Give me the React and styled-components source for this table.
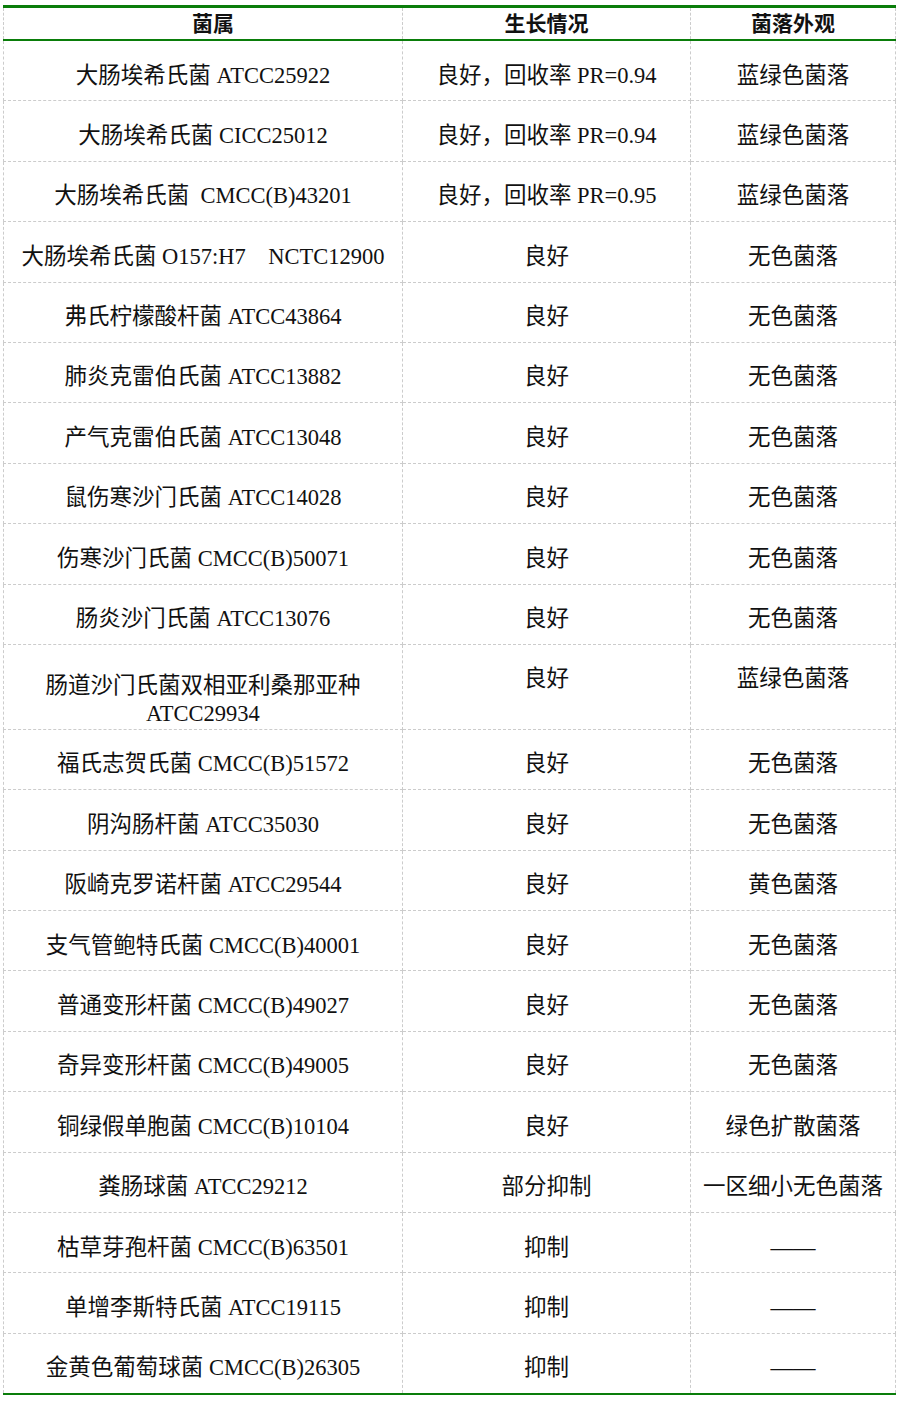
import React from "react";
import styled, { createGlobalStyle } from "styled-components";

const GlobalStyle = createGlobalStyle`
  html, body {
    margin: 0;
    padding: 0;
    background: #ffffff;
  }
  body {
    font-family: "Liberation Serif", "Noto Sans CJK SC", serif;
    color: #111;
  }
`;

const Table = styled.table`
  margin: 5px 0 0 3px;
  width: 892px;
  border-collapse: collapse;
  table-layout: fixed;
  border-bottom: 2px solid #0a7d0a;
`;

const HeadCell = styled.th`
  height: 31px;
  padding: 0 0 0 ${(p) => p.$shift || 0}px;
  font-size: 21px;
  line-height: 28px;
  font-weight: bold;
  text-align: center;
  border-left: 1px dashed #cccccc;
  border-right: 1px dashed #cccccc;
  border-top: 3px solid #0a7d0a;
  border-bottom: 2px solid #0a7d0a;
`;

const Cell = styled.td`
  padding: ${(p) => (p.$tall ? "27px 4px 1px" : "20.5px 4px 10.9px")};
  font-size: 22.5px;
  line-height: 28px;
  text-align: center;
  vertical-align: top;
  white-space: pre-wrap;
  border: 1px dashed #cccccc;
`;

const rows = [
  ["大肠埃希氏菌 ATCC25922", "良好，回收率 PR=0.94", "蓝绿色菌落"],
  ["大肠埃希氏菌 CICC25012", "良好，回收率 PR=0.94", "蓝绿色菌落"],
  ["大肠埃希氏菌  CMCC(B)43201", "良好，回收率 PR=0.95", "蓝绿色菌落"],
  ["大肠埃希氏菌 O157:H7    NCTC12900", "良好", "无色菌落"],
  ["弗氏柠檬酸杆菌 ATCC43864", "良好", "无色菌落"],
  ["肺炎克雷伯氏菌 ATCC13882", "良好", "无色菌落"],
  ["产气克雷伯氏菌 ATCC13048", "良好", "无色菌落"],
  ["鼠伤寒沙门氏菌 ATCC14028", "良好", "无色菌落"],
  ["伤寒沙门氏菌 CMCC(B)50071", "良好", "无色菌落"],
  ["肠炎沙门氏菌 ATCC13076", "良好", "无色菌落"],
  ["肠道沙门氏菌双相亚利桑那亚种 ATCC29934", "良好", "蓝绿色菌落", true],
  ["福氏志贺氏菌 CMCC(B)51572", "良好", "无色菌落"],
  ["阴沟肠杆菌 ATCC35030", "良好", "无色菌落"],
  ["阪崎克罗诺杆菌 ATCC29544", "良好", "黄色菌落"],
  ["支气管鲍特氏菌 CMCC(B)40001", "良好", "无色菌落"],
  ["普通变形杆菌 CMCC(B)49027", "良好", "无色菌落"],
  ["奇异变形杆菌 CMCC(B)49005", "良好", "无色菌落"],
  ["铜绿假单胞菌 CMCC(B)10104", "良好", "绿色扩散菌落"],
  ["粪肠球菌 ATCC29212", "部分抑制", "一区细小无色菌落"],
  ["枯草芽孢杆菌 CMCC(B)63501", "抑制", "——"],
  ["单增李斯特氏菌 ATCC19115", "抑制", "——"],
  ["金黄色葡萄球菌 CMCC(B)26305", "抑制", "——"],
];

export default function App() {
  return (
    <>
      <GlobalStyle />
      <Table>
        <colgroup>
          <col style={{ width: 399 }} />
          <col style={{ width: 288 }} />
          <col style={{ width: 205 }} />
        </colgroup>
        <thead>
          <tr>
            <HeadCell $shift={20}>菌属</HeadCell>
            <HeadCell>生长情况</HeadCell>
            <HeadCell>菌落外观</HeadCell>
          </tr>
        </thead>
        <tbody>
          {rows.map(([strain, growth, look, tall]) => (
            <tr key={strain}>
              <Cell $tall={tall}>{strain}</Cell>
              <Cell>{growth}</Cell>
              <Cell>{look}</Cell>
            </tr>
          ))}
        </tbody>
      </Table>
    </>
  );
}
